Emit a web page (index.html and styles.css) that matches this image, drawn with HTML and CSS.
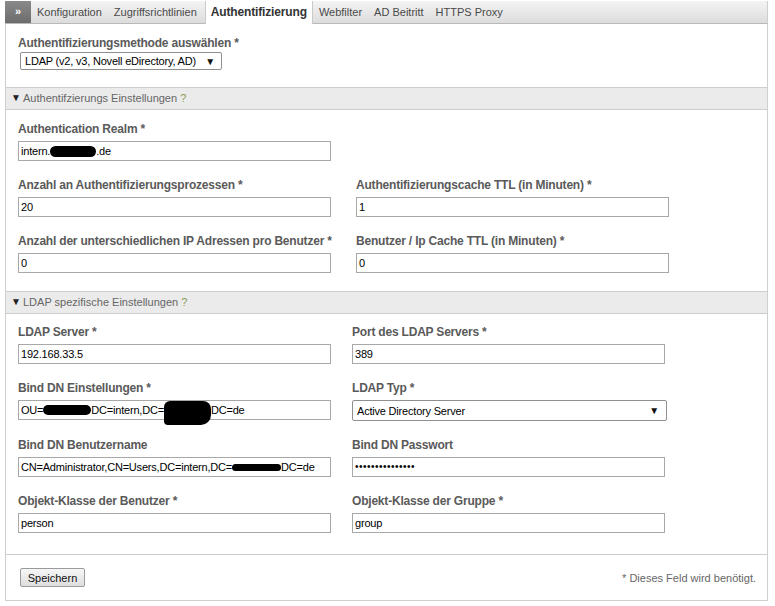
FILE: index.html
```html
<!DOCTYPE html>
<html lang="de">
<head>
<meta charset="utf-8">
<title>Authentifizierung</title>
<link rel="stylesheet" href="styles.css">
</head>
<body>
<div class="wrap">
  <div class="tabs">
    <div class="tab-toggle">&raquo;</div>
    <div class="tab">Konfiguration</div>
    <div class="tab">Zugriffsrichtlinien</div>
    <div class="tab active">Authentifizierung</div>
    <div class="tab">Webfilter</div>
    <div class="tab">AD Beitritt</div>
    <div class="tab">HTTPS Proxy</div>
  </div>
  <div class="panel">
    <div class="method">
      <div class="label label-top">Authentifizierungsmethode auswählen *</div>
      <div class="select select-method"><span>LDAP (v2, v3, Novell eDirectory, AD)</span><span class="arrow">&#9660;</span></div>
    </div>

    <div class="sec-head"><span class="tri">&#9660;</span>Authentifzierungs Einstellungen <span class="help">?</span></div>
    <div class="sec-body grid grid-a">
      <div class="group">
        <div class="label">Authentication Realm *</div>
        <div class="field">intern.<span class="blob blob-realm"></span>.de</div>
      </div>
      <div></div>
      <div class="group">
        <div class="label">Anzahl an Authentifizierungsprozessen *</div>
        <div class="field">20</div>
      </div>
      <div class="group">
        <div class="label">Authentifizierungscache TTL (in Minuten) *</div>
        <div class="field">1</div>
      </div>
      <div class="group">
        <div class="label">Anzahl der unterschiedlichen IP Adressen pro Benutzer *</div>
        <div class="field">0</div>
      </div>
      <div class="group">
        <div class="label">Benutzer / Ip Cache TTL (in Minuten) *</div>
        <div class="field">0</div>
      </div>
    </div>

    <div class="sec-head"><span class="tri">&#9660;</span>LDAP spezifische Einstellungen <span class="help">?</span></div>
    <div class="sec-body grid grid-b">
      <div class="group">
        <div class="label">LDAP Server *</div>
        <div class="field">192.168.33.5</div>
      </div>
      <div class="group">
        <div class="label">Port des LDAP Servers *</div>
        <div class="field">389</div>
      </div>
      <div class="group">
        <div class="label">Bind DN Einstellungen *</div>
        <div class="field">OU=<span class="blob blob-ou"></span>DC=intern,DC=<span class="blob blob-tall"></span>DC=de</div>
      </div>
      <div class="group">
        <div class="label">LDAP Typ *</div>
        <div class="select select-type"><span>Active Directory Server</span><span class="arrow">&#9660;</span></div>
      </div>
      <div class="group">
        <div class="label">Bind DN Benutzername</div>
        <div class="field">CN=Administrator,CN=Users,DC=intern,DC=<span class="blob blob-thin"></span>DC=de</div>
      </div>
      <div class="group">
        <div class="label">Bind DN Passwort</div>
        <div class="field field-pw">&#8226;&#8226;&#8226;&#8226;&#8226;&#8226;&#8226;&#8226;&#8226;&#8226;&#8226;&#8226;&#8226;&#8226;&#8226;</div>
      </div>
      <div class="group">
        <div class="label">Objekt-Klasse der Benutzer *</div>
        <div class="field">person</div>
      </div>
      <div class="group">
        <div class="label">Objekt-Klasse der Gruppe *</div>
        <div class="field">group</div>
      </div>
    </div>

    <div class="footer">
      <button class="btn" type="button">Speichern</button>
      <span class="note">* Dieses Feld wird benötigt.</span>
    </div>
  </div>
</div>
</body>
</html>
```

FILE: styles.css
```css
html, body {
  margin: 0;
  padding: 0;
  background: #fff;
}

body {
  font-family: "Liberation Sans", Arial, sans-serif;
  font-size: 12px;
  color: #000;
}

.wrap {
  margin-left: 5px;
  margin-top: 1px;
  width: 763px;
}

/* Tabs */
.tabs {
  display: flex;
  align-items: stretch;
  height: 22px;
  background: linear-gradient(#f4f4f4, #dcdcdc);
  border-bottom: 1px solid #b9b9b9;
  border-right: 1px solid #cfcfcf;
}

.tab-toggle {
  width: 26px;
  background: linear-gradient(#8a8a8a, #6c6c6c);
  color: #fff;
  font-weight: bold;
  font-size: 11px;
  line-height: 20px;
  text-align: center;
}

.tab {
  padding: 0 6px;
  line-height: 23px;
  color: #4a4a4a;
  font-size: 11px;
}

.tab.active {
  background: #fff;
  border-left: 1px solid #c9c9c9;
  border-right: 1px solid #c9c9c9;
  margin: 0 0 -1px 2px;
  color: #333;
  font-weight: bold;
  font-size: 12px;
  letter-spacing: -0.15px;
  padding: 0 5px;
}

/* Panel */
.panel {
  border-left: 1px solid #cfcfcf;
  border-right: 1px solid #cfcfcf;
  border-bottom: 1px solid #cfcfcf;
}

.method {
  padding: 12px 12px 17px 12px;
}

.label {
  font-weight: bold;
  color: #5a5a5a;
  line-height: 16px;
  margin-bottom: 4px;
  white-space: nowrap;
  letter-spacing: -0.2px;
}

.label-top {
  line-height: 14px;
  margin-bottom: 2px;
}

.select {
  display: flex;
  align-items: center;
  justify-content: space-between;
  box-sizing: border-box;
  border: 1px solid #8f8f8f;
  border-radius: 2px;
  background: #fff;
  padding: 0 6px 0 4px;
  color: #000;
  font-size: 11px;
  letter-spacing: -0.2px;
  white-space: nowrap;
}

.select-method {
  margin-left: 2px;
  width: 202px;
  height: 18px;
}

.select-type {
  width: 315px;
  height: 21px;
  padding-right: 7px;
}

.arrow {
  font-size: 10px;
  color: #111;
}

.sec-head {
  height: 21px;
  line-height: 21px;
  background: #ebebeb;
  border-top: 1px solid #cdcdcd;
  border-bottom: 1px solid #cdcdcd;
  color: #666;
  padding-left: 5px;
  font-size: 11px;
}

.tri {
  display: inline-block;
  font-size: 10px;
  color: #222;
  width: 12px;
  vertical-align: top;
  line-height: 20px;
}

.help {
  color: #8a9b58;
}

.sec-body {
  padding: 11px 12px 18px 12px;
}

.grid {
  display: grid;
  grid-template-columns: 313px 313px;
  row-gap: 16px;
}

.grid-a {
  column-gap: 25px;
}

.grid-b {
  column-gap: 21px;
  padding-top: 10px;
  padding-bottom: 21px;
}

.field {
  box-sizing: border-box;
  height: 20px;
  line-height: 18px;
  border: 1px solid #a8a8a8;
  padding: 0 2px;
  background: #fff;
  white-space: nowrap;
  overflow: visible;
  font-size: 11px;
  letter-spacing: -0.2px;
}

.field-pw {
  font-size: 10px;
  letter-spacing: 0.5px;
  line-height: 18px;
  padding-left: 2px;
}

.blob {
  display: inline-block;
  background: #000;
  border-radius: 7px;
  vertical-align: middle;
}

.blob-realm {
  width: 46px;
  height: 11px;
  margin-top: -2px;
}

.blob-ou {
  width: 48px;
  height: 10px;
  margin-top: -2px;
}

.blob-tall {
  width: 47px;
  height: 24px;
  vertical-align: top;
  margin-top: 0;
  margin-bottom: -10px;
  border-radius: 6px 8px 10px 4px;
}

.blob-thin {
  width: 49px;
  height: 7px;
  margin-top: -2px;
}

/* Footer */
.footer {
  display: flex;
  align-items: center;
  justify-content: space-between;
  border-top: 1px solid #cdcdcd;
  padding: 13px 11px 13px 14px;
}

.btn {
  font-family: "Liberation Sans", Arial, sans-serif;
  font-size: 11px;
  color: #111;
  width: 65px;
  height: 19px;
  padding: 0;
  border: 1px solid #9a9a9a;
  border-radius: 2px;
  background: linear-gradient(#f7f7f7, #dedede);
}

.note {
  font-size: 11px;
  color: #666;
}
```
